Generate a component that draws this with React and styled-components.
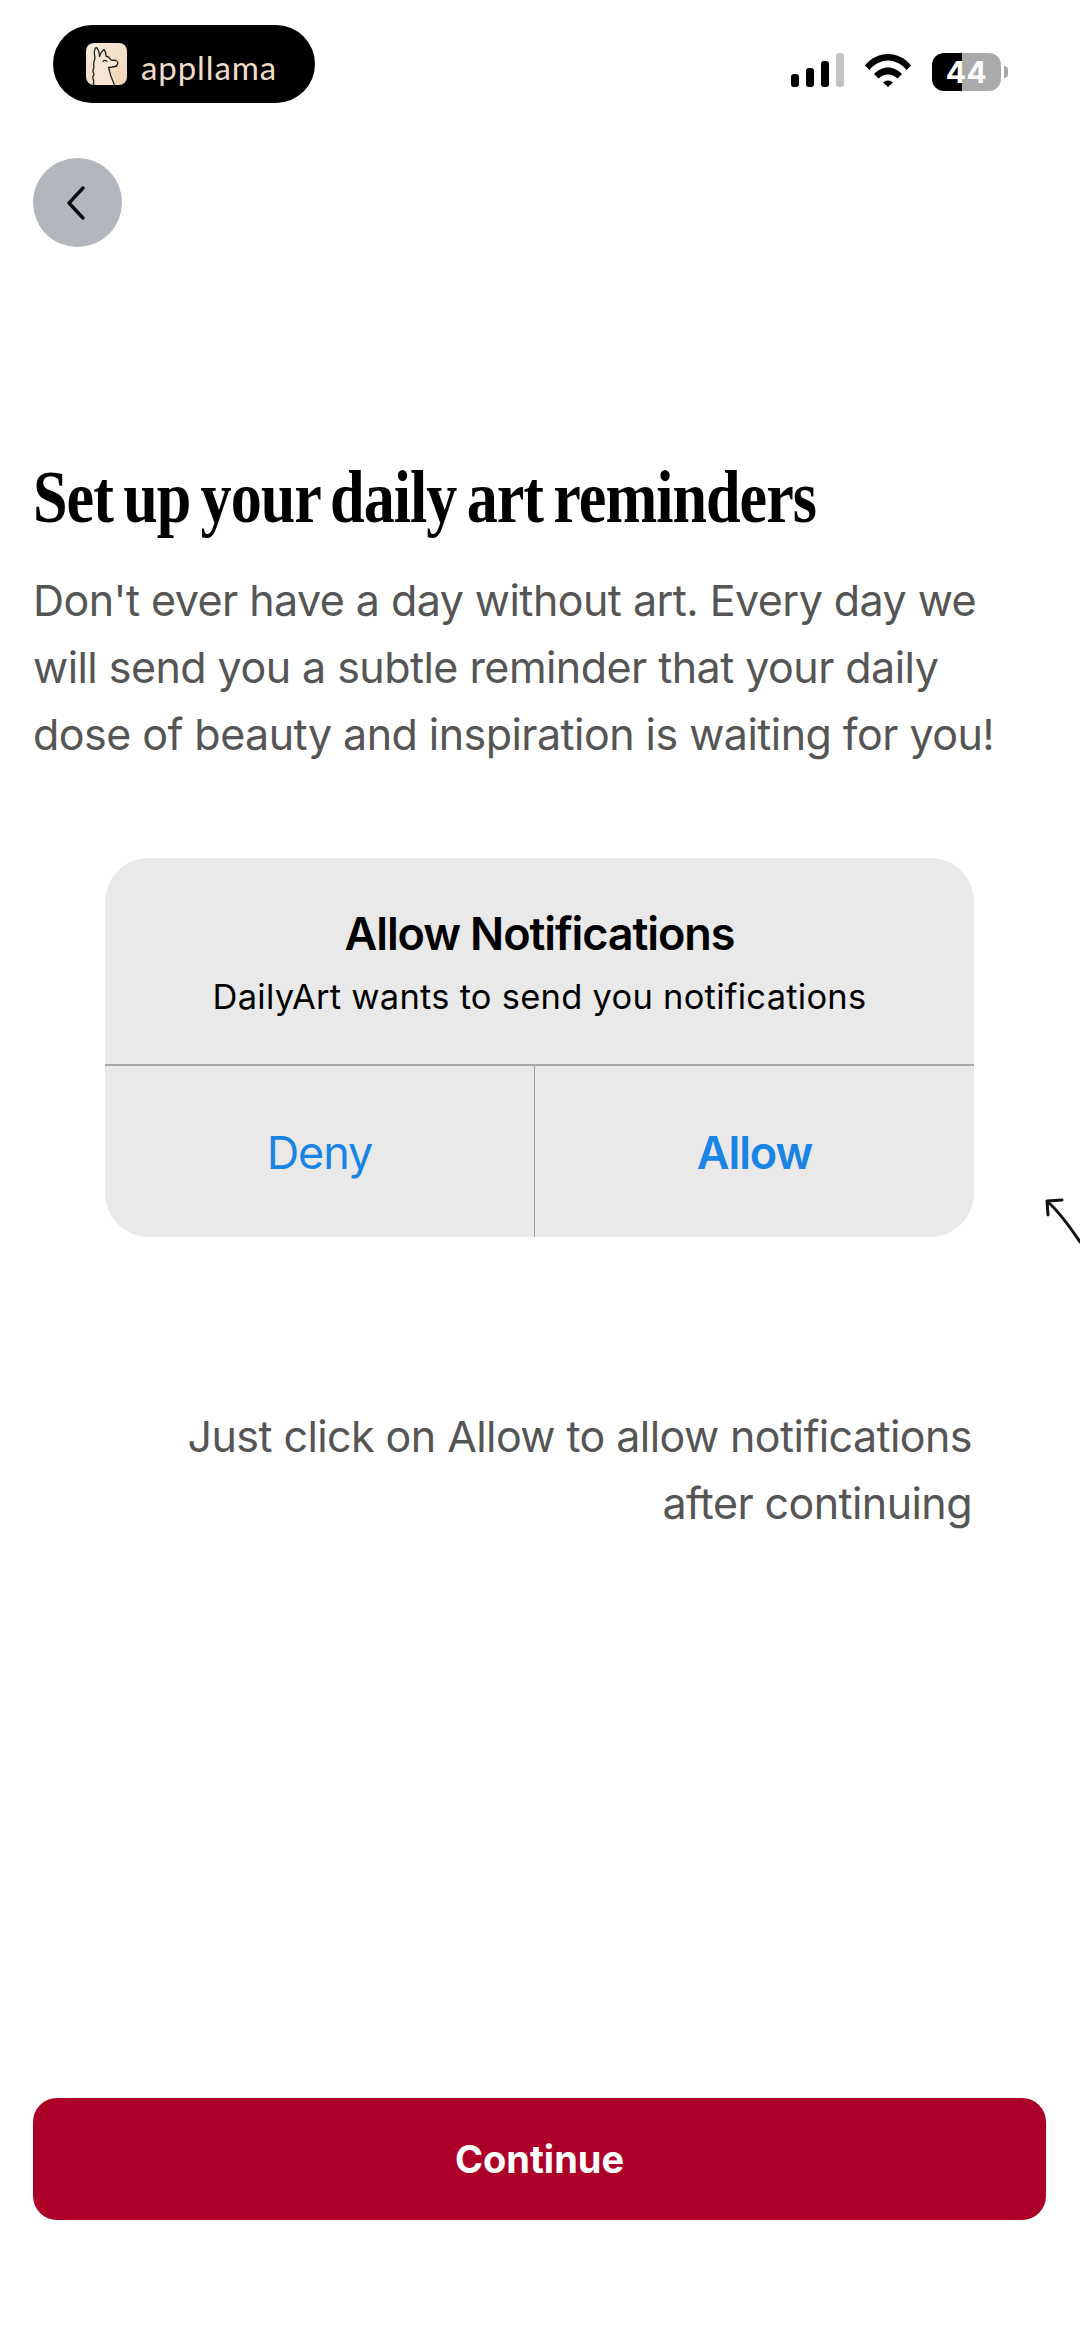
import React from "react";
import styled, { createGlobalStyle } from "styled-components";

const Global = createGlobalStyle`
    html, body {
        margin: 0;
        padding: 0;
        background: #fff;
    }
    * {
        box-sizing: border-box;
    }
`;

const Page = styled.div`
    position: relative;
    width: 1080px;
    height: 2336px;
    overflow: hidden;
    display: flex;
    flex-direction: column;
    padding: 25px 33px 116px;
    background: #fff;
    font-family: Inter, "Liberation Sans", sans-serif;
`;

const StatusBar = styled.div`
    display: flex;
    align-items: flex-start;
    justify-content: space-between;
    height: 78px;
    padding: 0 39px 0 20px;
`;

const LogoPill = styled.div`
    display: flex;
    align-items: center;
    width: 262px;
    height: 78px;
    padding: 0 0 0 33px;
    gap: 14px;
    border-radius: 39px;
    background: #000;
`;

const LogoText = styled.span`
    font-family: Lato, sans-serif;
    font-weight: 400;
    font-size: 33px;
    letter-spacing: 0.9px;
    color: #eedcc8;
    line-height: 42px;
    padding-top: 5px;
`;

const StatusIcons = styled.div`
    display: flex;
    align-items: flex-start;
    height: 38px;
    margin-top: 28px;
    gap: 21px;
`;

const Battery = styled.div`
    position: relative;
    display: flex;
    align-items: center;
    justify-content: center;
    width: 69px;
    height: 38px;
    margin-right: 7px;
    border-radius: 12px;
    background: linear-gradient(to right, #000 30px, #aaa 30px);
    color: #fff;
    font-family: Inter, sans-serif;
    font-weight: 700;
    font-size: 30px;
    letter-spacing: 0.5px;

    &::after {
        content: "";
        position: absolute;
        right: -7px;
        top: 13px;
        width: 4px;
        height: 12px;
        border-radius: 0 6px 6px 0;
        background: #aaa;
    }
`;

const BackButton = styled.button`
    display: flex;
    align-items: center;
    justify-content: center;
    width: 89px;
    height: 89px;
    margin-top: 55px;
    padding: 0 4px 0 0;
    border: none;
    border-radius: 50%;
    background: #b2b7be;
`;

const Title = styled.h1`
    margin: 205px 0 0;
    font-family: "Liberation Serif", serif;
    font-weight: 700;
    font-size: 74px;
    line-height: 90px;
    letter-spacing: -1.2px;
    word-spacing: -5px;
    color: #000;
    white-space: nowrap;
    transform: scaleX(0.84);
    transform-origin: left center;
`;

const Lead = styled.p`
    margin: 25px 0 0;
    font-size: 43px;
    line-height: 67px;
    font-weight: 400;
    letter-spacing: -0.55px;
    color: #555;
    white-space: nowrap;
`;

const Dialog = styled.div`
    width: 869px;
    margin: 90px 0 0 72px;
    border-radius: 44px;
    background: #e9e9e9;
    overflow: hidden;
`;

const DialogHead = styled.div`
    display: flex;
    flex-direction: column;
    align-items: center;
    height: 208px;
    padding-top: 49px;
    border-bottom: 2px solid #a8a8a8;
`;

const DialogTitle = styled.div`
    font-size: 45px;
    line-height: 54px;
    font-weight: 600;
    letter-spacing: -1.1px;
    color: #000;
`;

const DialogText = styled.div`
    margin-top: 14px;
    font-size: 34.5px;
    line-height: 44px;
    font-weight: 400;
    letter-spacing: 0.25px;
    color: #000;
`;

const DialogActions = styled.div`
    display: grid;
    grid-template-columns: 430px 1fr;
    height: 171px;
`;

const DialogAction = styled.div`
    display: flex;
    align-items: center;
    justify-content: center;
    padding-top: 2px;
    font-size: 45px;
    font-weight: ${(p) => (p.$strong ? 600 : 400)};
    letter-spacing: -1.1px;
    color: #1a84e5;
    border-right: ${(p) => (p.$divider ? "1px solid #9c9c9c" : "none")};
`;

const Hint = styled.p`
    margin: 166px 0 0;
    padding-right: 75px;
    font-size: 43px;
    line-height: 67px;
    letter-spacing: -0.58px;
    text-align: right;
    color: #555;
`;

const Continue = styled.button`
    width: 1013px;
    height: 122px;
    margin-top: auto;
    border: none;
    border-radius: 24px;
    background: #ad0029;
    color: #fff;
    font-family: Inter, sans-serif;
    font-weight: 700;
    font-size: 38px;
`;

const Arrow = styled.svg`
    position: absolute;
    left: 1040px;
    top: 1190px;
`;

const Llama = () => (
    <svg width="41" height="42" viewBox="0 0 41 42">
        <defs>
            <linearGradient id="llamaBg" x1="0" y1="0" x2="1" y2="1">
                <stop offset="0" stopColor="#f9ecdc" />
                <stop offset="1" stopColor="#efd3b6" />
            </linearGradient>
        </defs>
        <rect width="41" height="42" rx="8" fill="url(#llamaBg)" />
        <path
            d="M8 42V25c-1-4 0-7 1-10C8 10 8 6 10 4.500c2 .5 3.500 5 3.500 9 1-3 3-6 4.500-7 1.500 1.500 2 4 2 6.500 2 .5 4 2 5 4l5 .500c2 1 2.500 3.500.5 5-2 1.500-6 2-8 2 1 5 3 11 6 17.500z"
            fill="#f7e6d3"
        />
        <path
            d="M8 42c-1.500-1.500.5-3-.5-5s-1.500-2.500 0-4.500-1-3-.5-5 .5-2.500 1-3.500c-1-3 0-6 1-9C8 10 8 6 10 4.500c2 .5 3.500 5 3.500 9 1-3 3-6 4.500-7 1.500 1.500 2 4 2 6.500 2 .5 4 2 5 4l5 .500c2 1 2.500 3.500.5 5-2 1.500-6 2-8 2 1 5 3 11 6 17.500"
            fill="none"
            stroke="#26221f"
            strokeWidth="1.300"
            strokeLinecap="round"
            strokeLinejoin="round"
        />
        <path
            d="M17 18.500c1-1.500 3-1.500 4 0M31 23c-1.500.8-3 1-4.500.5"
            fill="none"
            stroke="#26221f"
            strokeWidth="1.200"
            strokeLinecap="round"
        />
    </svg>
);

const SignalBars = () => (
    <svg width="53" height="34" viewBox="0 0 53 34">
        <rect x="0" y="21" width="8" height="13" rx="3" fill="#000" />
        <rect x="15" y="15" width="8" height="19" rx="3" fill="#000" />
        <rect x="30" y="8" width="8" height="26" rx="3" fill="#000" />
        <rect x="45" y="0" width="8" height="34" rx="3" fill="#c4c4c4" />
    </svg>
);

const Wifi = () => (
    <svg width="46" height="34" viewBox="0 0 46 34">
        <path d="M0 12.500C6 5 14 1 23 1s17 4 23 11.500l-4.500 4.500C36.500 11 30 7.500 23 7.500S9.500 11 4.500 17z" fill="#000" />
        <path d="M9 21c4-4 9-6.500 14-6.500S33 17 37 21l-4.500 4.500C29.500 23 26.500 21.500 23 21.500S16.500 23 13.500 25.500z" fill="#000" />
        <path d="M18 29.500c1.500-1.300 3-2 5-2s3.500.7 5 2L23 34z" fill="#000" />
    </svg>
);

const Chevron = () => (
    <svg width="20" height="34" viewBox="0 0 20 34">
        <path d="M17 2 3 17l14 15" fill="none" stroke="#0c0c0e" strokeWidth="3.400" strokeLinecap="round" strokeLinejoin="round" />
    </svg>
);

const App = () => {
    return (
        <Page>
            <Global />
            <StatusBar>
                <LogoPill>
                    <Llama />
                    <LogoText>appllama</LogoText>
                </LogoPill>
                <StatusIcons>
                    <SignalBars />
                    <Wifi />
                    <Battery>44</Battery>
                </StatusIcons>
            </StatusBar>
            <BackButton>
                <Chevron />
            </BackButton>
            <Title>Set up your daily art reminders</Title>
            <Lead>
                Don't ever have a day without art. Every day we
                <br />
                will send you a subtle reminder that your daily
                <br />
                dose of beauty and inspiration is waiting for you!
            </Lead>
            <Dialog>
                <DialogHead>
                    <DialogTitle>Allow Notifications</DialogTitle>
                    <DialogText>DailyArt wants to send you notifications</DialogText>
                </DialogHead>
                <DialogActions>
                    <DialogAction $divider>Deny</DialogAction>
                    <DialogAction $strong>Allow</DialogAction>
                </DialogActions>
            </Dialog>
            <Hint>
                Just click on Allow to allow notifications
                <br />
                after continuing
            </Hint>
            <Continue>Continue</Continue>
            <Arrow width="40" height="54" viewBox="0 0 40 54">
                <path
                    d="M8 12c10 9 20 22 32 40M8 25 7 11l15-1"
                    fill="none"
                    stroke="#111"
                    strokeWidth="3"
                    strokeLinecap="round"
                    strokeLinejoin="round"
                />
            </Arrow>
        </Page>
    );
};

export default App;
